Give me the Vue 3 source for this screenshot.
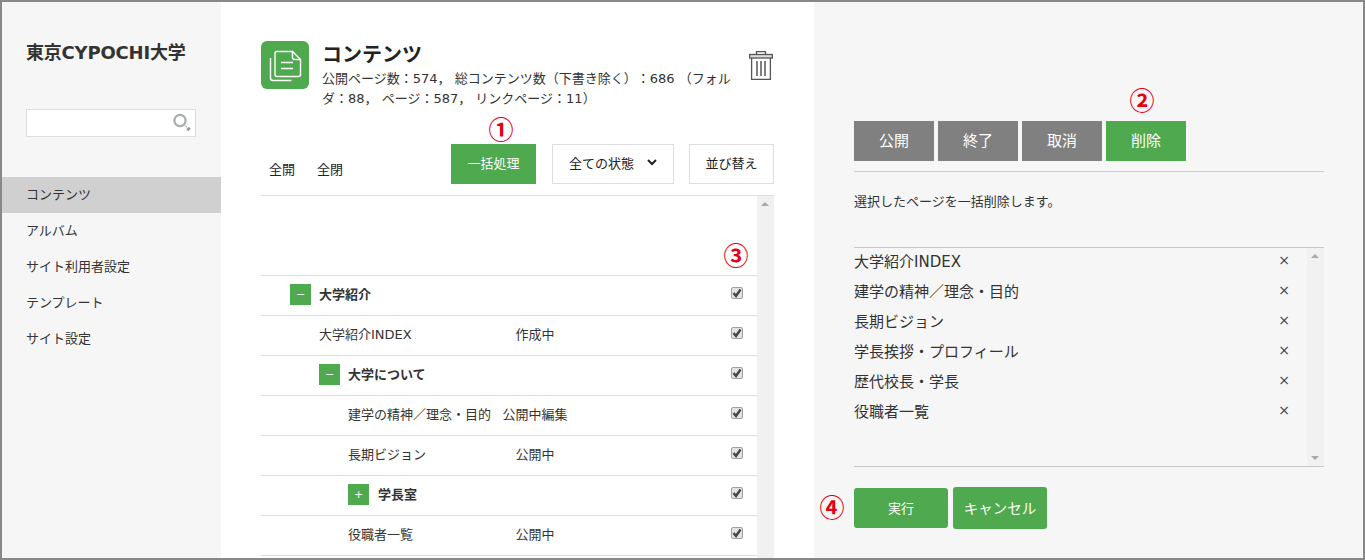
<script setup>
const rows = [
  { name: '大学紹介', toggle: '−', indent: 29, folder: true },
  { name: '大学紹介INDEX', status: '作成中', indent: 58 },
  { name: '大学について', toggle: '−', indent: 58, folder: true },
  { name: '建学の精神／理念・目的', status: '公開中編集', indent: 87 },
  { name: '長期ビジョン', status: '公開中', indent: 87 },
  { name: '学長室', toggle: '+', indent: 87, folder: true, wide: true },
  { name: '役職者一覧', status: '公開中', indent: 87 }
]
const nav = ['コンテンツ', 'アルバム', 'サイト利用者設定', 'テンプレート', 'サイト設定']
const picks = ['大学紹介INDEX', '建学の精神／理念・目的', '長期ビジョン', '学長挨拶・プロフィール', '歴代校長・学長', '役職者一覧']
const actions = ['公開', '終了', '取消', '削除']
</script>

<template>
  <div class="frame">
    <aside class="side">
      <h1 class="brand">東京CYPOCHI大学</h1>
      <div class="search">
        <svg width="20" height="20" viewBox="0 0 20 20">
          <circle cx="8" cy="7.500" r="5.600" fill="none" stroke="#a9adad" stroke-width="2.200" />
          <path d="M12 11.500l3 3" stroke="#c4c6c6" stroke-width="1.200" />
          <path d="M15.500 15l2 2" stroke="#999" stroke-width="3.600" />
        </svg>
      </div>
      <nav class="nav">
        <div v-for="(n, i) in nav" :key="n" class="nav-item" :class="{ on: i === 0 }">{{ n }}</div>
      </nav>
    </aside>

    <main class="main">
      <header class="head">
        <div class="logo">
          <svg width="48" height="48" viewBox="0 0 48 48" fill="none" stroke="#fff" stroke-width="1.400">
            <path d="M16 10.500h15.500l8 8v15a2 2 0 0 1-2 2h-21.500a2 2 0 0 1-2-2v-21a2 2 0 0 1 2-2z" />
            <path d="M31.500 10.500v6a2 2 0 0 0 2 2h6" />
            <path d="M20 21.500h12M20 27.500h12" stroke-width="1.600" />
            <path d="M9.500 17v20a2.500 2.500 0 0 0 2.500 2.500h18.500" />
          </svg>
        </div>
        <div class="head-text">
          <h2 class="title">コンテンツ</h2>
          <p class="sub">公開ページ数：574， 総コンテンツ数（下書き除く）：686 （フォルダ：88， ページ：587， リンクページ：11）</p>
        </div>
        <svg class="trash" width="24" height="29" viewBox="0 0 24 29" fill="none" stroke="#555" stroke-width="1.300">
          <path d="M7.500 3.500v-2.800h9v2.800" />
          <rect x=".6" y="3.500" width="22.800" height="3.500" fill="#ddd" />
          <path d="M2.600 7v21.300h18.800v-21.300" />
          <path d="M8 10v15M12 10v15M16 10v15" stroke-width="1.500" />
        </svg>
      </header>

      <div class="tools">
        <span class="link first">全開</span>
        <span class="link">全閉</span>
        <button class="btn green bulk">一括処理</button>
        <button class="btn line state">全ての状態
          <svg width="10" height="7" viewBox="0 0 10 7" fill="none" stroke="#222" stroke-width="2"><path d="M1 1l4 4 4-4" /></svg>
        </button>
        <button class="btn line sort">並び替え</button>
      </div>

      <div class="tree">
        <div class="tree-body">
          <div class="spacer"></div>
          <div v-for="r in rows" :key="r.name" class="row">
            <div class="name" :class="{ bold: r.folder }" :style="{ paddingLeft: r.indent + 'px' }">
              <span v-if="r.toggle" class="toggle">{{ r.toggle }}</span>
              <span class="label" :class="{ wide: r.wide }">{{ r.name }}</span>
            </div>
            <div class="status">{{ r.status }}</div>
            <span class="check">
              <svg width="10" height="10" viewBox="0 0 10 10" fill="none" stroke="#444" stroke-width="2.400"><path d="M1.500 5l2.500 3 4.500-6.500" /></svg>
            </span>
          </div>
        </div>
        <div class="bar">
          <i class="up"></i>
        </div>
      </div>
    </main>

    <section class="panel">
      <div class="actions">
        <button v-for="a in actions" :key="a" class="act" :class="{ green: a === '削除' }">{{ a }}</button>
      </div>
      <p class="desc">選択したページを一括削除します。</p>
      <div class="picks">
        <div class="pick-list">
          <div v-for="p in picks" :key="p" class="pick">
            <span class="pick-name">{{ p }}</span>
            <span class="x">×</span>
          </div>
        </div>
        <div class="bar small">
          <i class="up"></i>
          <i class="down"></i>
        </div>
      </div>
      <div class="foot">
        <button class="run">実行</button>
        <button class="run cancel">キャンセル</button>
      </div>
    </section>

    <span class="mark m1">①</span>
    <span class="mark m2">②</span>
    <span class="mark m3">③</span>
    <span class="mark m4">④</span>
  </div>
</template>

<style>
html, body { margin: 0; padding: 0; }
</style>

<style scoped>
.frame {
  position: relative;
  box-sizing: border-box;
  width: 1365px;
  height: 560px;
  border: 2px solid #888;
  display: flex;
  overflow: hidden;
  background: #f6f6f6;
  font-family: "DejaVu Sans", "Noto Sans CJK JP", sans-serif;
  font-size: 13px;
  color: #333;
  text-spacing-trim: space-all;
}
h1, h2, p { margin: 0; }
button { font-family: inherit; cursor: pointer; }

.side { width: 219px; flex: none; padding-top: 39px; }
.brand { margin-left: 24px; font-size: 18px; line-height: 24px; font-weight: 700; color: #333; letter-spacing: -.2px; }
.search {
  margin: 44px 0 40px 24px;
  box-sizing: border-box;
  width: 170px;
  height: 28px;
  background: #fff;
  border: 1px solid #ddd;
  display: flex;
  justify-content: flex-end;
  align-items: center;
  padding-right: 3px;
}
.nav-item { height: 36px; line-height: 36px; padding-left: 24px; }
.nav-item.on { background: #d0d0d0; }

.main { width: 593px; flex: none; background: #fff; padding: 39px 40px 0; box-sizing: border-box; }
.head { display: flex; height: 103px; }
.logo { width: 48px; height: 48px; border-radius: 6px; background: #4ea94f; flex: none; }
.head-text { width: 414px; margin-left: 13px; }
.title { font-size: 20px; line-height: 28px; font-weight: 700; color: #222; }
.sub { line-height: 20px; color: #333; }
.trash { margin: 10px 0 0 13px; flex: none; }

.tools { display: flex; align-items: flex-start; height: 40px; padding-bottom: 11px; border-bottom: 1px solid #ddd; }
.link { margin-top: 16px; margin-left: 22px; line-height: 20px; color: #222; }
.link.first { margin-left: 8px; }
.btn { height: 40px; box-sizing: border-box; font-size: 13px; padding: 0 0 3px; background: #fff; color: #222; border: 1px solid #ddd; }
.btn.green { background: #4ea94f; color: #fff; border: 0; }
.bulk { width: 85px; margin-left: 108px; }
.state { width: 122px; margin-left: 16px; display: flex; align-items: center; justify-content: center; gap: 13px; }
.sort { width: 85px; margin-left: 15px; }

.tree { display: flex; height: 362px; overflow: hidden; }
.tree-body { width: 496px; flex: none; }
.spacer { height: 79px; border-bottom: 1px solid #ddd; }
.row { height: 39px; border-bottom: 1px solid #ddd; display: flex; align-items: center; }
.name { width: 235px; flex: none; box-sizing: border-box; display: flex; align-items: center; color: #333; margin-bottom: 2px; }
.label { line-height: 20px; }
.name.bold { font-weight: 700; }
.toggle {
  width: 21px;
  height: 21px;
  background: #4ea94f;
  color: #fff;
  font-size: 11px;
  font-weight: 400;
  line-height: 21px;
  text-align: center;
  margin-right: 8px;
}
.wide { margin-left: 1px; }
.status { width: 78px; flex: none; text-align: center; line-height: 20px; margin-bottom: 2px; }
.check {
  margin-left: 157px;
  box-sizing: border-box;
  width: 12px;
  height: 12px;
  margin-bottom: 5px;
  border: 1px solid #a0a0a0;
  border-radius: 2px;
  background: #e2e2e2;
  display: flex;
  align-items: center;
  justify-content: center;
  flex: none;
}
.bar { width: 17px; flex: none; background: #f1f1f1; position: relative; }
.up, .down { position: absolute; left: 4px; width: 0; height: 0; border-left: 4px solid transparent; border-right: 4px solid transparent; }
.up { top: 6px; border-bottom: 4px solid #a9a9a9; }
.down { bottom: 6px; border-top: 4px solid #a9a9a9; }

.panel { flex: 1; padding: 119px 39px 0 40px; }
.actions { display: flex; gap: 4px; padding-bottom: 10px; border-bottom: 1px solid #ccc; }
.act { width: 80px; height: 40px; border: 0; padding: 0 0 3px; background: #808080; color: #fff; font-size: 15px; }
.act.green { background: #4ea94f; }
.desc { margin-top: 20px; line-height: 20px; color: #333; }
.picks { margin-top: 35px; height: 218px; display: flex; border-top: 1px solid #c8c8c8; border-bottom: 1px solid #c8c8c8; }
.pick-list { flex: 1; }
.pick { height: 30px; display: flex; align-items: center; justify-content: space-between; padding-right: 17px; font-size: 15px; line-height: 26px; color: #333; }
.pick-name { margin-bottom: 3px; }
.x { font-size: 14px; color: #444; margin-bottom: 6px; }
.foot { display: flex; align-items: center; gap: 5px; margin-top: 20px; }
.run { width: 94px; height: 40px; border: 0; border-radius: 3px; padding: 0 0 2px; background: #4ea94f; color: #fff; font-size: 13px; }
.cancel { height: 42px; font-size: 14.500px; }

.mark { position: absolute; color: #e60012; font-family: "Noto Sans CJK JP", sans-serif; font-weight: 700; font-size: 25px; line-height: 30px; width: 30px; text-align: center; }
.m1 { left: 484px; top: 111px; }
.m2 { left: 1125px; top: 82px; }
.m3 { left: 719px; top: 237px; }
.m4 { left: 815px; top: 489px; }
</style>
